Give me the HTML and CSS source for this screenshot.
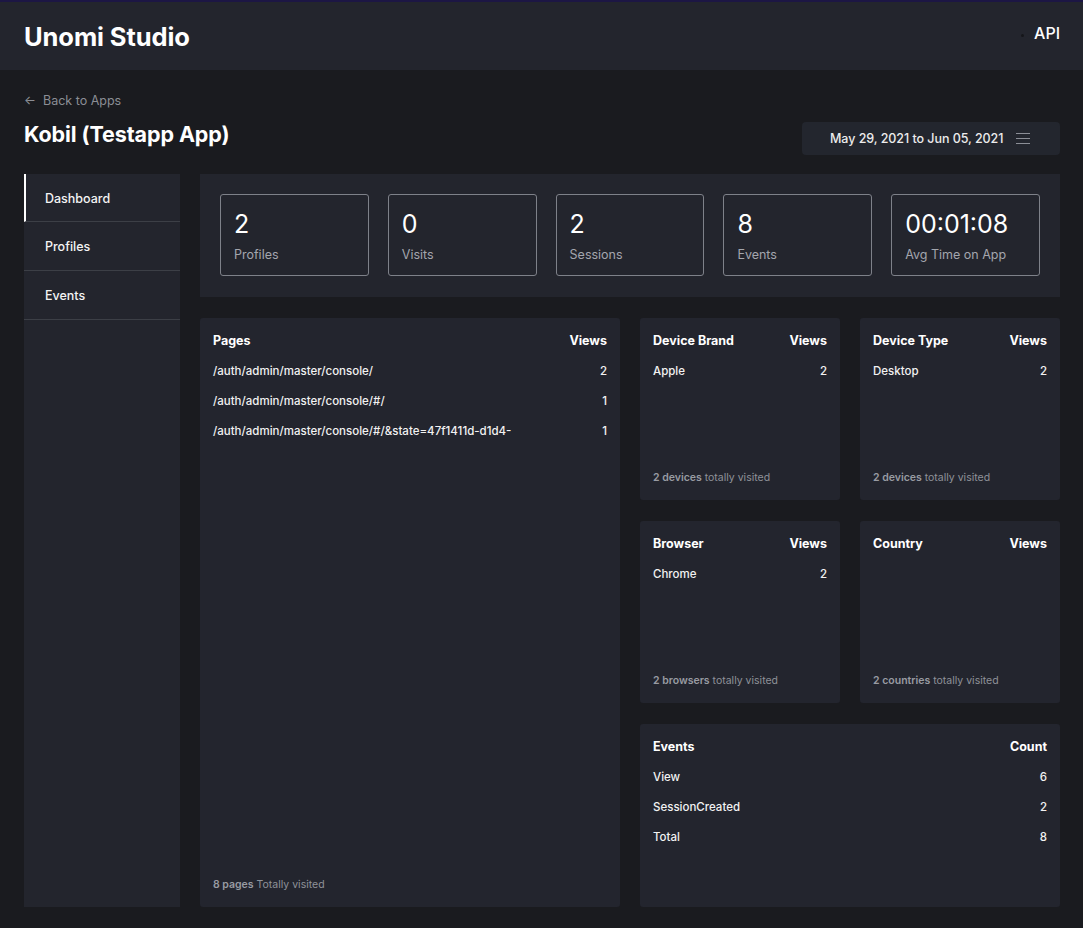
FILE: index.html
```html
<!DOCTYPE html>
<html lang="en">
<head>
<meta charset="utf-8">
<title>Unomi Studio</title>
<link rel="stylesheet" href="styles.css">
</head>
<body>
<header class="topbar">
  <div class="brand">Unomi Studio</div>
  <nav class="topnav"><span class="dot"></span><a class="api">API</a></nav>
</header>
<div class="page">
  <a class="back">&larr;&nbsp; Back to Apps</a>
  <div class="titlerow">
    <h1 class="title">Kobil (Testapp App)</h1>
    <div class="datebox">
      <span class="daterange">May 29, 2021 to Jun 05, 2021</span>
      <svg class="menuicon" width="14" height="11" viewBox="0 0 14 11"><path d="M0 0.5H14M0 5.5H14M0 10.5H14" stroke="#8b8e96" stroke-width="1"/></svg>
    </div>
  </div>
  <div class="layout">
    <aside class="sidebar">
      <div class="navitem active">Dashboard</div>
      <div class="navitem">Profiles</div>
      <div class="navitem">Events</div>
    </aside>
    <main class="main">
      <section class="stats">
        <div class="stat"><div class="num">2</div><div class="lbl">Profiles</div></div>
        <div class="stat"><div class="num">0</div><div class="lbl">Visits</div></div>
        <div class="stat"><div class="num">2</div><div class="lbl">Sessions</div></div>
        <div class="stat"><div class="num">8</div><div class="lbl">Events</div></div>
        <div class="stat"><div class="num">00:01:08</div><div class="lbl">Avg Time on App</div></div>
      </section>
      <section class="cards">
        <div class="card pages">
          <div class="row head"><span>Pages</span><span>Views</span></div>
          <div class="row"><span>/auth/admin/master/console/</span><span>2</span></div>
          <div class="row"><span>/auth/admin/master/console/#/</span><span>1</span></div>
          <div class="row"><span>/auth/admin/master/console/#/&amp;state=47f1411d-d1d4-</span><span>1</span></div>
          <div class="foot"><b>8 pages</b> Totally visited</div>
        </div>
        <div class="card">
          <div class="row head"><span>Device Brand</span><span>Views</span></div>
          <div class="row"><span>Apple</span><span>2</span></div>
          <div class="foot"><b>2 devices</b> totally visited</div>
        </div>
        <div class="card">
          <div class="row head"><span>Device Type</span><span>Views</span></div>
          <div class="row"><span>Desktop</span><span>2</span></div>
          <div class="foot"><b>2 devices</b> totally visited</div>
        </div>
        <div class="card">
          <div class="row head"><span>Browser</span><span>Views</span></div>
          <div class="row"><span>Chrome</span><span>2</span></div>
          <div class="foot"><b>2 browsers</b> totally visited</div>
        </div>
        <div class="card">
          <div class="row head"><span>Country</span><span>Views</span></div>
          <div class="foot"><b>2 countries</b> totally visited</div>
        </div>
        <div class="card events">
          <div class="row head"><span>Events</span><span>Count</span></div>
          <div class="row"><span>View</span><span>6</span></div>
          <div class="row"><span>SessionCreated</span><span>2</span></div>
          <div class="row"><span>Total</span><span>8</span></div>
        </div>
      </section>
    </main>
  </div>
</div>
</body>
</html>
```
FILE: styles.css
```css
* { box-sizing: border-box; }
html, body { margin: 0; padding: 0; }
body {
  background: #1a1b1f;
  color: #ffffff;
  font-family: Inter, "Noto Sans", "Liberation Sans", sans-serif;
  height: 928px;
  overflow: hidden;
}
.topbar {
  border-top: 2px solid #1c1644;
  background: #23252d;
  height: 70px;
  padding: 0 23px 0 24px;
  display: flex;
  align-items: center;
  justify-content: space-between;
}
.brand {
  font-size: 25.5px;
  font-weight: 700;
  letter-spacing: -0.1px;
  margin-top: 0;
}
.topnav { display: flex; align-items: center; gap: 10px; margin-top: -6px; }
.dot { width: 3px; height: 3px; border-radius: 50%; background: #15161a; margin-top: 4px; }
.api { font-size: 16px; font-weight: 500; color: #fff; }
.page { padding: 22px 23px 0 24px; }
.back {
  display: block;
  font-size: 12.5px;
  line-height: 16px;
  color: #8b8e95;
  height: 16px;
  padding-top: 1px;
}
.titlerow {
  margin-top: 14px;
  display: flex;
  justify-content: space-between;
  align-items: flex-start;
  height: 33px;
}
.title {
  margin: 0;
  font-size: 21.5px;
  line-height: 24px;
  font-weight: 700;
  letter-spacing: -0.1px;
}
.datebox {
  width: 258px;
  height: 33px;
  background: #23262e;
  border-radius: 4px;
  display: flex;
  align-items: center;
  padding-left: 28px;
  gap: 13px;
}
.daterange { font-size: 12.5px; font-weight: 500; color: #ececec; letter-spacing: -0.05px; }
.menuicon { display: block; }
.layout {
  margin-top: 19px;
  display: flex;
  gap: 20px;
  height: 733px;
}
.sidebar {
  width: 156px;
  flex: none;
  background: #23252d;
}
.navitem {
  height: 49px;
  border-bottom: 1px solid #3c3f46;
  padding-left: 21px;
  padding-top: 1px;
  display: flex;
  align-items: center;
  font-size: 12.5px;
  font-weight: 500;
  color: #f4f4f4;
}
.navitem.active { border-left: 2px solid #ffffff; padding-left: 19px; height: 48px; padding-top: 2px; }
.main { flex: 1; display: flex; flex-direction: column; gap: 21px; }
.stats {
  background: #23252d;
  padding: 20px;
  display: grid;
  grid-template-columns: repeat(5, 1fr);
  gap: 19px;
  height: 123px;
}
.stat {
  border: 1px solid #7e8189;
  border-radius: 3px;
  padding: 14px 13px 12px;
  height: 82px;
}
.num { font-size: 25px; line-height: 30px; font-weight: 400; color: #fff; }
.lbl { margin-top: 8px; font-size: 12.5px; line-height: 16px; color: #a3a6ad; }
.cards {
  display: grid;
  grid-template-columns: 1fr 200px 200px;
  grid-template-rows: 182px 182px 183px;
  gap: 21px 20px;
}
.card {
  background: #23252e;
  border-radius: 3px;
  padding: 15px 13px 14px 13px;
  display: flex;
  flex-direction: column;
}
.card.pages { grid-row: 1 / 4; grid-column: 1; }
.card.events { grid-column: 2 / 4; }
.row {
  display: flex;
  justify-content: space-between;
  font-size: 11.5px;
  line-height: 16px;
  padding-top: 14px;
  color: #f2f2f2;
  font-weight: 500;
}
.row.head { padding-top: 0; font-size: 12.5px; font-weight: 700; color: #fff; }
.foot {
  margin-top: auto;
  font-size: 10.5px;
  line-height: 16px;
  color: #8f9299;
}
.foot b { font-weight: 600; color: #989ba2; }
```
